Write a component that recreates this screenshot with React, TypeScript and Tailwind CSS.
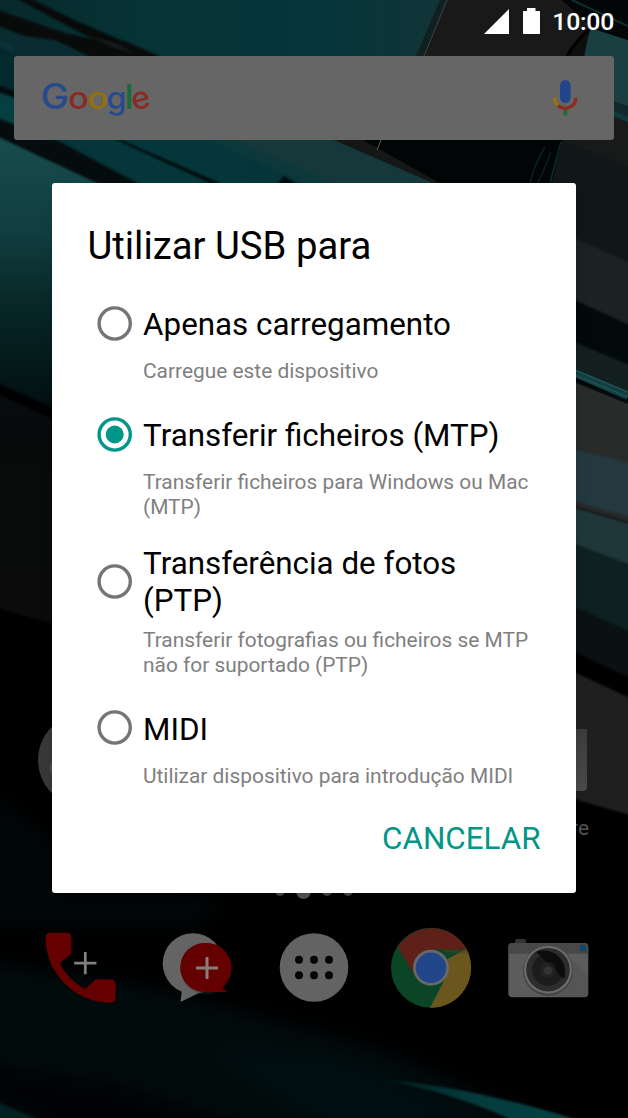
const options = [
  { title: "Apenas carregamento", text: "Carregue este dispositivo" },
  {
    title: "Transferir ficheiros (MTP)",
    text: "Transferir ficheiros para Windows ou Mac (MTP)",
    checked: true,
  },
  {
    title: "Transferência de fotos (PTP)",
    text: "Transferir fotografias ou ficheiros se MTP não for suportado (PTP)",
  },
  { title: "MIDI", text: "Utilizar dispositivo para introdução MIDI" },
];

const Wallpaper = () => (
  <svg className="absolute inset-0" width="628" height="1118" viewBox="0 0 628 1118">
    <defs>
      <linearGradient id="left" gradientUnits="userSpaceOnUse" x1="0" y1="150" x2="0" y2="410">
        <stop offset="0" stopColor="#164a4b" />
        <stop offset="0.3" stopColor="#123f40" />
        <stop offset="0.6" stopColor="#082728" />
        <stop offset="1" stopColor="#030f10" />
      </linearGradient>
      <linearGradient id="sky" x1="0" y1="0" x2="1" y2="0">
        <stop offset="0" stopColor="#07292c" />
        <stop offset="0.3" stopColor="#073336" />
        <stop offset="0.7" stopColor="#05363a" />
        <stop offset="1" stopColor="#133438" />
      </linearGradient>
      <linearGradient id="slate" gradientUnits="userSpaceOnUse" x1="0" y1="390" x2="0" y2="600">
        <stop offset="0" stopColor="#060c0d" />
        <stop offset="0.4" stopColor="#0a0b0b" />
        <stop offset="1" stopColor="#0b0b0b" />
      </linearGradient>
      <linearGradient id="glow" x1="0" y1="0" x2="1" y2="0">
        <stop offset="0" stopColor="#021a1b" />
        <stop offset="0.4" stopColor="#053a3c" />
        <stop offset="1" stopColor="#064345" />
      </linearGradient>
      <filter id="soft" filterUnits="userSpaceOnUse" x="-20" y="-20" width="668" height="1160" colorInterpolationFilters="sRGB">
        <feGaussianBlur stdDeviation="1" />
      </filter>
      <filter id="softer" filterUnits="userSpaceOnUse" x="-40" y="700" width="710" height="480" colorInterpolationFilters="sRGB">
        <feGaussianBlur stdDeviation="9" />
      </filter>
    </defs>
    <rect width="628" height="1118" fill="#000" />

    {/* upper glass panels */}
    <rect width="460" height="190" fill="url(#sky)" />
    <g filter="url(#soft)">
      <path d="M-10 18L90 60H14V100L-10 90z" fill="#082c2f" />
      <path d="M-10 44L20 57V100L-10 86z" fill="#03292c" />
      <path d="M-10 36L14 46L14 52L-10 42z" fill="#0b3436" />
      <path d="M-10 92L20 99V136L-10 121z" fill="#063f42" />
      <path d="M-10 8L0 11L30 21L65 33L105 42L125 41L163 58H92L55 40L25 36L-10 23z" fill="#090b0b" />
      <path d="M12 -4H26L70 18L125 42L163 58H130L75 30z" fill="#080a0a" />
      <path d="M88 36L108 41L122 46L135 54L112 47z" fill="#151b1c" />
      <path d="M-10 82L16 92V98L-10 88z" fill="#020b0c" />
      <path d="M-10 110L60 140L148 186L250 200V140H60z" fill="#04363a" />
      <path d="M-10 130L120 190V430H-10z" fill="url(#left)" />
      <path d="M-10 115L60 142L150 190H112L-10 133z" fill="#040c0e" />
      <path d="M112 136L222 184H212L108 136z" fill="#020a0c" />
      <path d="M200 136L310 186H440L320 136z" fill="#0d383b" />
      <path d="M230 138L300 168L340 186H440L330 138z" fill="#16383a" />
      <path d="M284 176L300 186H276z" fill="#020a0c" />
    </g>
    <path d="M447 0H562L592 26L584 56H424z" fill="#191919" />
    <path d="M440 0H446L424 56H416z" fill="#111f21" />
    <path d="M447 0L424 56" stroke="#3a4242" strokeWidth="1" />
    <path d="M590 28L628 40V170H580L584 56z" fill="#193f40" />
    <path d="M610 100L628 106V150H610z" fill="#12282a" />
    <path d="M562 0H628V40L590 26z" fill="#020607" />
    <path d="M572 0L628 26" stroke="#0d2d30" strokeWidth="2" />
    <path d="M590 28Q578 44 568 50V56H584z" fill="#0e0e0e" />
    <path d="M592 27Q576 40 567 56" fill="none" stroke="#020202" strokeWidth="3" />
    <path d="M334 140H390L460 186H440z" fill="#151717" />
    <path d="M363 140H562L552 186H445z" fill="#010506" />
    <path d="M381 140L377 150" stroke="#506060" strokeWidth="1" />
    <path d="M545 147Q534 165 530 183M551 152Q544 170 538 183" fill="none" stroke="#0a2123" strokeWidth="1.500" />
    <path d="M561 142L550 183" stroke="#0d2c2e" strokeWidth="1.500" />

    {/* bands on the right edge */}
    <path d="M562 140L612 118L628 122V262L552 232V183z" fill="#111719" />
    <path d="M562 140H614V118L628 122V166z" fill="#181a1a" />
    <path d="M612 110L628 117V122L612 115z" fill="#12393c" />
    <g filter="url(#soft)">
      <path d="M570 236L634 264V330L570 298z" fill="#1c2223" />
      <path d="M570 298L634 327V368L570 340z" fill="#01090b" />
      <path d="M570 340L634 367V396L570 368z" fill="#142020" />
      <path d="M570 380L634 404V465L570 448z" fill="#292a2a" />
      <path d="M570 448L634 464V522L570 500z" fill="#23393f" />
      <path d="M570 500L634 518V524L570 505z" fill="#282829" />
      <path d="M570 506L634 525V568L570 542z" fill="#20373a" />
      <path d="M570 542L634 566V634L570 605z" fill="#0e2021" />
      <path d="M570 605L634 634V680L570 650z" fill="#0b1011" />
      <path d="M570 670L634 700V816L570 798z" fill="#1f1f1f" />
    </g>
    <path d="M570 371L628 396" stroke="#123f42" strokeWidth="8" />
    <path d="M570 368L628 392M570 373L628 397" stroke="#245659" strokeWidth="1.200" />
    <path d="M570 379L628 403" stroke="#020f12" strokeWidth="2" />

    {/* left edge */}
    <g filter="url(#soft)">
      <path d="M-10 386L60 416V626L-10 606z" fill="url(#slate)" />
      <path d="M-10 380L60 411V422L-10 391z" fill="#000" />
    </g>

    {/* floor */}
    <g filter="url(#softer)">
      <path d="M-30 780L40 830L230 900L200 925L-30 925z" fill="#010607" />
      <path d="M-30 960L160 990L380 1050L560 1130H-30z" fill="#010b0c" />
      <path d="M210 1050L330 1056L500 1130H330z" fill="#010f10" />
      <path d="M-30 1062L120 1085L260 1130H60L-30 1090z" fill="#000304" />
    </g>
    <g filter="url(#soft)">
      <path d="M380 1079Q480 1088 590 1124H520Q460 1094 380 1079z" fill="url(#glow)" />
      <path d="M-10 1099L45 1122H-10z" fill="#032022" />
    </g>
  </svg>
);

const StatusBar = () => (
  <div className="flex h-[56px] items-start justify-end pr-[14px] pt-[7px] text-white">
    <svg className="mr-[14px] mt-[2px]" width="25" height="25" viewBox="0 0 25 25">
      <path d="M0 25L25 0V25z" fill="currentColor" />
    </svg>
    <svg className="mr-[12px] mt-[1px]" width="17" height="26" viewBox="0 0 17 26">
      <path d="M4 0H12.500V3H16.500L17 3.500V25.500L16.500 26H0.500L0 25.500V3.500L0.500 3H4z" fill="currentColor" />
    </svg>
    <div className="text-[24.800px] leading-[30px] font-medium tracking-[-0.25px]">10:00</div>
  </div>
);

const SearchBar = () => (
  <div className="mx-[14px] flex h-[84px] items-center justify-between rounded-[3px] bg-[#666] pl-[27px] pr-[35px]">
    <svg width="116" height="70" viewBox="0 0 116 70" className="font-['Inter']" fontSize="31" fontWeight="500">
      <text x="-0.500" y="45.800" fill="#274a8e" fontSize="35.500" textLength="28.500" lengthAdjust="spacingAndGlyphs">G</text>
      <text x="27.200" y="45.800" fill="#8a2a22" textLength="20.500" lengthAdjust="spacingAndGlyphs">o</text>
      <text x="46.400" y="45.800" fill="#94700a" textLength="20.500" lengthAdjust="spacingAndGlyphs">o</text>
      <text x="65.500" y="45.800" fill="#274a8e" textLength="20" lengthAdjust="spacingAndGlyphs">g</text>
      <text x="83.500" y="45.800" fill="#1c6a34" fontSize="34" textLength="9" lengthAdjust="spacingAndGlyphs">l</text>
      <text x="90.500" y="45.800" fill="#8a2a22" textLength="18.800" lengthAdjust="spacingAndGlyphs" transform="rotate(-14 99.500 37.500)">e</text>
    </svg>
    <svg width="28" height="38" viewBox="0 0 28 38">
      <rect x="9" y="1" width="10.600" height="23" rx="5.300" fill="#23458c" />
      <path d="M12.500 31H16.200V36.500H12.500z" fill="#1c6a34" />
      <path d="M3.500 18.800A10.800 10.800 0 0 0 7 26.500" fill="none" stroke="#98730b" strokeWidth="3.400" />
      <path d="M7 26.500A10.800 10.800 0 0 0 25 18.800" fill="none" stroke="#8f2c22" strokeWidth="3.400" />
    </svg>
  </div>
);

const Dock = () => (
  <div className="grid grid-cols-5 justify-items-center px-[22px]">
    <svg width="94" height="94" viewBox="-0.2 0 24 24">
      <path
        fill="#640000"
        d="M6.620 10.790c1.440 2.830 3.760 5.140 6.590 6.590l2.200-2.200c.27-.27.67-.36 1.020-.24H19.700c.7 0 1.200.5 1.200 1.200V19.700c0 .7-.5 1.200-1.200 1.200C10.600 20.900 3 13.400 3 4.200 3 3.500 3.500 3 4.200 3h4.200c.7 0 1.200.5 1.200 1.200v3.370c0 .4 0 .8-.3 1.020z"
      />
      <path d="M13.150 7.900v5.700M10.300 10.750h5.700" stroke="#808080" strokeWidth="0.700" />
    </svg>
    <svg width="94" height="94" viewBox="0 0 94 94">
      <path d="M32 68L30.500 81L54 69.500z" fill="#646464" />
      <circle cx="43" cy="42.500" r="30.300" fill="#646464" />
      <circle cx="56" cy="48" r="25.500" fill="#303030" opacity="0.350" />
      <path d="M57 22A24.600 24.600 0 1 0 57 71H77L72 66A24.600 24.600 0 0 0 57 22" fill="#640000" />
      <path d="M57 36V58M46 47H68" stroke="#8c7c7c" strokeWidth="3" />
    </svg>
    <svg width="94" height="94" viewBox="0 0 94 94">
      <circle cx="47" cy="46.500" r="34.300" fill="#636363" />
      {[32, 47, 62].map((x) => (
        <g key={x} fill="#030303">
          <circle cx={x} cy="38.700" r="4" />
          <circle cx={x} cy="54.200" r="4" />
        </g>
      ))}
    </svg>
    <svg width="94" height="94" viewBox="0 0 94 94">
      <circle cx="47" cy="46.700" r="40" fill="#0a4526" />
      <path d="M47 46.700L82.500 28A40 40 0 0 1 46 86.700L62 56z" fill="#6b571d" />
      <path d="M13.800 26A40 40 0 0 1 83 28.500H47L31.500 56z" fill="#5e2019" />
      <path d="M55 29H83L84.500 33L62 31z" fill="#4f4015" opacity="0.500" />
      <circle cx="47" cy="46.700" r="18" fill="#686868" />
      <circle cx="47" cy="46.700" r="15.200" fill="#22468a" />
    </svg>
    <svg width="94" height="94" viewBox="0 0 94 94">
      <rect x="14" y="18" width="11" height="8" rx="2" fill="#333" />
      <rect x="7.300" y="22" width="80" height="54.200" rx="4" fill="#5c5c5c" />
      <path d="M7.300 32.700V26Q7.300 22 11.300 22H83.300Q87.300 22 87.300 26V32.700z" fill="#484848" />
      <path d="M66 34L87 55V72Q87 76 83 76H52z" fill="#505050" opacity="0.600" />
      <circle cx="82" cy="27.300" r="3.200" fill="#094b6c" />
      <circle cx="47" cy="49.700" r="25" fill="#444" />
      <circle cx="47" cy="48.700" r="24" fill="#6a6a6a" />
      <circle cx="47" cy="48.700" r="21.800" fill="#2c2c2c" />
      <circle cx="47" cy="48.700" r="16" fill="#1c1c1c" />
      <path d="M35 31A21.500 21.500 0 0 1 63 58z" fill="#0c0c0c" />
      <circle cx="47" cy="49" r="8" fill="#282828" opacity="0.600" />
      <circle cx="47" cy="49.500" r="4" fill="#343434" />
    </svg>
  </div>
);

const Home = () => (
  <div className="absolute inset-0 flex flex-col">
    <StatusBar />
    <SearchBar />
    <div className="mt-[573px] flex h-[94px] items-start justify-between pl-[38px] pr-[41px]">
      <div className="size-[94px] rounded-full bg-[#383838] pl-[12px] pt-[43px]">
        <div className="size-[24px] rounded-full bg-[#515151]" />
      </div>
      <div className="mt-[16px] h-[62px] w-[70px] rounded-br-[4px] bg-linear-to-b from-[#3c3c3c] to-[#4a4a4a]" />
    </div>
    <div className="mt-[8px] h-[26px] pr-[39px] text-right text-[20.900px] leading-[26px] text-[#555]">re</div>
    <div className="mt-[42px] flex h-[16px] items-center justify-center gap-[11px]">
      <div className="size-[10px] rounded-full bg-[#484848]" />
      <div className="size-[15px] rounded-full bg-[#555]" />
      <div className="size-[10px] rounded-full bg-[#484848]" />
      <div className="size-[10px] rounded-full bg-[#484848]" />
    </div>
    <div className="mt-[22px]">
      <Dock />
    </div>
  </div>
);

const Radio = ({ checked }: { checked?: boolean }) => (
  <svg className="shrink-0" width="35" height="35" viewBox="0 0 35 35">
    <circle cx="17.700" cy="17.500" r="15.600" fill="none" stroke={checked ? "#009688" : "#757575"} strokeWidth="3.400" />
    {checked && <circle cx="17.700" cy="17.500" r="9" fill="#009688" />}
  </svg>
);

export default function App() {
  return (
    <div className="relative h-[1118px] w-[628px] overflow-hidden bg-black font-['Roboto',sans-serif]">
      <Wallpaper />
      <Home />
      <div className="absolute inset-0 px-[52.400px] pt-[183px]">
        <div className="h-[710px] rounded-[3px] bg-white px-[35px] pt-[40px] shadow-lg">
          <h1 className="text-[38.300px] leading-[45px] text-black">Utilizar USB para</h1>
          <div className="mt-[27.500px] flex flex-col gap-[22px]">
            {options.map((option) => (
              <div key={option.title}>
                <div className="flex min-h-[56px] items-center gap-[10.700px] pl-[10px]">
                  <Radio checked={option.checked} />
                  <div className="pt-[3.500px] pb-[1px] text-[31.350px] leading-[37px] text-black">{option.title}</div>
                </div>
                <div className="mt-[7.800px] pl-[55.600px] text-[20.900px] leading-[24.900px] text-[#808080]">
                  {option.text}
                </div>
              </div>
            ))}
          </div>
          <div className="mt-[31px] text-right text-[31.400px] leading-[37px] text-[#009688]">CANCELAR</div>
        </div>
      </div>
    </div>
  );
}
